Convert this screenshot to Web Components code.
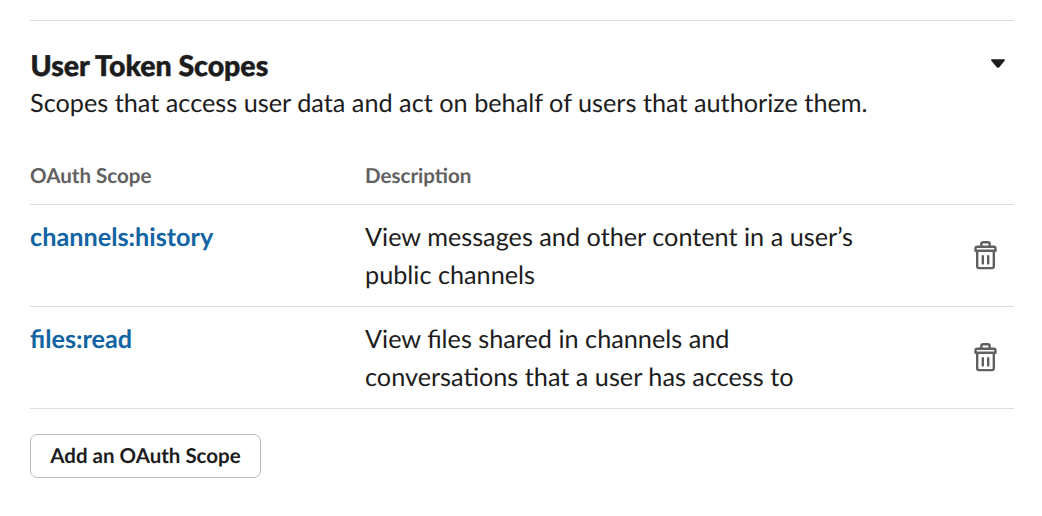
<!DOCTYPE html>
<html lang="en"><head><meta charset="utf-8"><title>User Token Scopes</title>
<style>body{margin:0;background:#fff;color:#1d1c1d;font-family:Lato,sans-serif;text-rendering:geometricPrecision}</style></head>
<body>
<token-scopes>
<span slot="title">User Token Scopes</span>
<span slot="summary">Scopes that access user data and act on behalf of users that authorize them.</span>
<scope-row name="channels:history">View messages and other content in a user’s<br>public channels</scope-row>
<scope-row name="files:read">View files shared in channels and<br>conversations that a user has access to</scope-row>
<scope-button slot="action">Add an OAuth Scope</scope-button>
</token-scopes>
<script>
class TrashIcon extends HTMLElement{constructor(){super();this.attachShadow({mode:'open'}).innerHTML=`<style>:host{display:block;width:24px;height:30px}svg{display:block}</style>
<svg width="24" height="30" viewBox="0 0 24 30" fill="none" stroke="#616061" stroke-width="2.4" stroke-linecap="round" stroke-linejoin="round"><path d="M7.3 6.7V4.2Q7.3 2.2 9.2 2.2h4.6Q15.7 2.2 15.7 4.2V6.7M1.5 10.7V8.4Q1.5 6.7 3.2 6.7h16.6q1.7 0 1.7 1.7v2.3zM3.2 10.9v15.4q0 1.8 1.8 1.8h13q1.8 0 1.8-1.8V10.9M8.8 16.2v7.2M14.2 16.2v7.2"/></svg>`}}
customElements.define('trash-icon',TrashIcon);
class ScopeRow extends HTMLElement{constructor(){super();this.attachShadow({mode:'open'}).innerHTML=`<style>:host{display:grid;grid-template-columns:335px 1fr 40px;box-sizing:border-box;height:102px;padding-top:13px;border-bottom:1px solid #ddd;font-size:25.25px;line-height:38px}b{color:#1264a3;font-weight:700}trash-icon{margin:22px 0 0}</style><b></b><div><slot></slot></div><trash-icon></trash-icon>`}
connectedCallback(){this.shadowRoot.querySelector('b').textContent=this.getAttribute('name')}}
customElements.define('scope-row',ScopeRow);
class ScopeButton extends HTMLElement{constructor(){super();this.attachShadow({mode:'open'}).innerHTML=`<style>:host{display:block}button{display:block;box-sizing:border-box;width:231px;height:44px;padding:0;border:1px solid #bbb;border-radius:7px;background:#fff;color:#1d1c1d;font:700 20.5px/40px Lato,sans-serif;text-rendering:inherit}</style><button><slot></slot></button>`}}
customElements.define('scope-button',ScopeButton);
class TokenScopes extends HTMLElement{constructor(){super();this.attachShadow({mode:'open'}).innerHTML=`<style>:host{display:block;padding:20px 28px 0 30px}
header{border-top:1px solid #ddd;display:flex;justify-content:space-between;padding-top:26px}
h2{margin:0;font-size:28.5px;line-height:38px;font-weight:900;-webkit-text-stroke:.5px #1d1c1d;padding-left:.5px}p{margin:-1px 0 0;font-size:25.28px;line-height:38px}svg{display:block;margin:12px 8px 0 0}
.head{display:grid;grid-template-columns:335px 1fr;border-bottom:1px solid #ddd;height:41px;margin-top:41px;font-size:20.55px;line-height:26px;font-weight:700;color:#616061}
footer{margin-top:25px}</style>
<header><div><h2><slot name="title"></slot></h2><p><slot name="summary"></slot></p></div><svg width="16" height="10" viewBox="0 0 16 10"><path d="M2 .2h12q1.6 0 .7 1.5L9.2 8.2q-1.2 1.3-2.4 0L1.3 1.7Q.4 .2 2 .2z" fill="#1d1c1d"/></svg></header>
<div class="head"><span>OAuth Scope</span><span>Description</span></div><slot></slot><footer><slot name="action"></slot></footer>`}}
customElements.define('token-scopes',TokenScopes);
</script></body></html>
